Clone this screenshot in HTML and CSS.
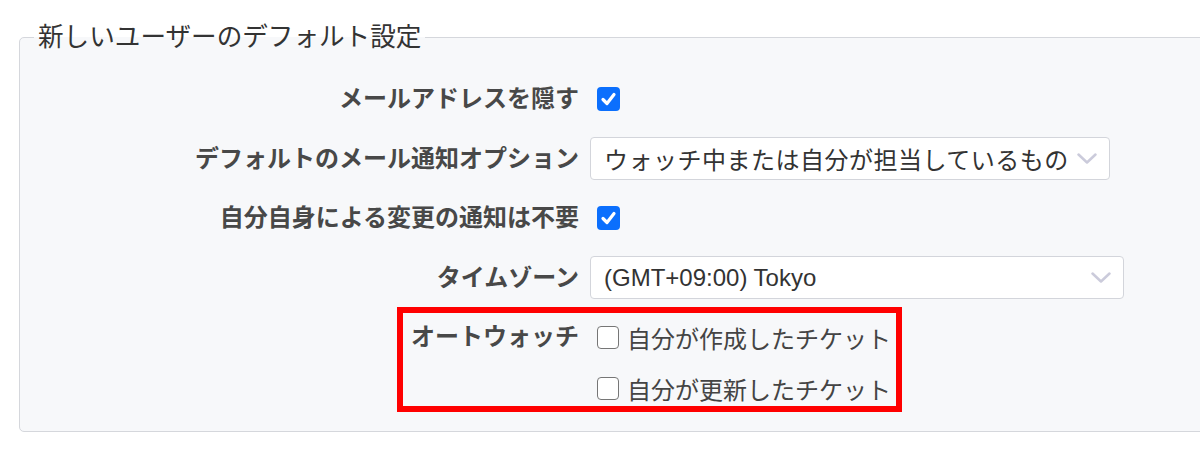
FILE: index.html
```html
<!DOCTYPE html>
<html lang="ja">
<head>
<meta charset="utf-8">
<title>新しいユーザーのデフォルト設定</title>
<link rel="stylesheet" href="styles.css">
</head>
<body>
<fieldset class="box">
  <legend class="box-title">新しいユーザーのデフォルト設定</legend>
  <div class="rows">
    <div class="row">
      <span class="row-label">メールアドレスを隠す</span>
      <div class="row-field">
        <span class="check is-checked"><svg width="23" height="24" viewBox="0 0 23 24"><polyline points="6,12.5 10,16.5 17,7.5" fill="none" stroke="#fff" stroke-width="3.2" stroke-linecap="round" stroke-linejoin="round"/></svg></span>
      </div>
    </div>
    <div class="row">
      <span class="row-label">デフォルトのメール通知オプション</span>
      <div class="row-field">
        <div class="select select-mail"><span class="select-text-jp">ウォッチ中または自分が担当しているもの</span><svg class="chevron" width="20" height="11" viewBox="0 0 20 11"><polyline points="1.5,1.5 10,9.5 18.5,1.5" fill="none" stroke="#cbcbdb" stroke-width="2.5" stroke-linecap="round" stroke-linejoin="round"/></svg></div>
      </div>
    </div>
    <div class="row">
      <span class="row-label">自分自身による変更の通知は不要</span>
      <div class="row-field">
        <span class="check is-checked"><svg width="23" height="24" viewBox="0 0 23 24"><polyline points="6,12.5 10,16.5 17,7.5" fill="none" stroke="#fff" stroke-width="3.2" stroke-linecap="round" stroke-linejoin="round"/></svg></span>
      </div>
    </div>
    <div class="row">
      <span class="row-label">タイムゾーン</span>
      <div class="row-field">
        <div class="select select-tz"><span>(GMT+09:00) Tokyo</span><svg class="chevron" width="20" height="11" viewBox="0 0 20 11"><polyline points="1.5,1.5 10,9.5 18.5,1.5" fill="none" stroke="#cbcbdb" stroke-width="2.5" stroke-linecap="round" stroke-linejoin="round"/></svg></div>
      </div>
    </div>
    <div class="row row-multi">
      <span class="row-label row-label-top">オートウォッチ</span>
      <div class="row-field options">
        <div class="option"><span class="check"></span>自分が作成したチケット</div>
        <div class="option"><span class="check"></span>自分が更新したチケット</div>
      </div>
      <div class="highlight"></div>
    </div>
  </div>
</fieldset>
</body>
</html>
```
FILE: styles.css
```css
html {
  overflow: hidden;
}

body {
  margin: 0;
  background: #ffffff;
  font-family: "Liberation Sans", "Noto Sans CJK JP", sans-serif;
}

.box {
  margin: 22px -40px 0 19px;
  padding: 25.5px 0 20px 14px;
  border: 1px solid #d5d7dc;
  border-radius: 5px;
  background: #f7f8fa;
  min-width: 0;
}

.box-title {
  padding: 0 4px;
  font-size: 25.6px;
  line-height: 30px;
  color: #333333;
}

.rows {
  display: flex;
  flex-direction: column;
  gap: 16.5px;
}

.row {
  position: relative;
  display: grid;
  grid-template-columns: 545px auto;
  column-gap: 11px;
  align-items: center;
  min-height: 43px;
}

.row-label {
  text-align: right;
  font-weight: bold;
  font-size: 24px;
  line-height: 30px;
  color: #484848;
}

.row-field {
  display: flex;
  align-items: center;
}

.check {
  display: flex;
  flex: none;
  box-sizing: border-box;
  width: 22px;
  height: 23px;
  margin-left: 7px;
  border: 1.5px solid #767676;
  border-radius: 4px;
  background: #ffffff;
}

.check.is-checked {
  width: 23px;
  height: 24px;
  border: none;
  background: #0b6ffd;
}

.select {
  display: flex;
  align-items: center;
  justify-content: space-between;
  box-sizing: border-box;
  height: 43px;
  padding: 0 12px 0 13px;
  border: 1px solid #d3d5db;
  border-radius: 4px;
  background: #ffffff;
  font-size: 24px;
  color: #333333;
}

.select-text-jp {
  letter-spacing: 0.5px;
}

.select-mail {
  width: 520px;
}

.select-tz {
  width: 534px;
}

.chevron {
  flex: none;
}

.row-multi {
  align-items: start;
}

.row-label-top {
  line-height: 42px;
}

.options {
  flex-direction: column;
  align-items: flex-start;
  gap: 6px;
  margin-top: -1px;
}

.option {
  display: flex;
  align-items: center;
  height: 45px;
  font-size: 24px;
  color: #444444;
}

.option .check {
  margin-right: 8px;
}

.highlight {
  position: absolute;
  left: 363px;
  top: -8.5px;
  width: 505px;
  height: 105px;
  box-sizing: border-box;
  border: 6px solid #ff0000;
  pointer-events: none;
}
```
